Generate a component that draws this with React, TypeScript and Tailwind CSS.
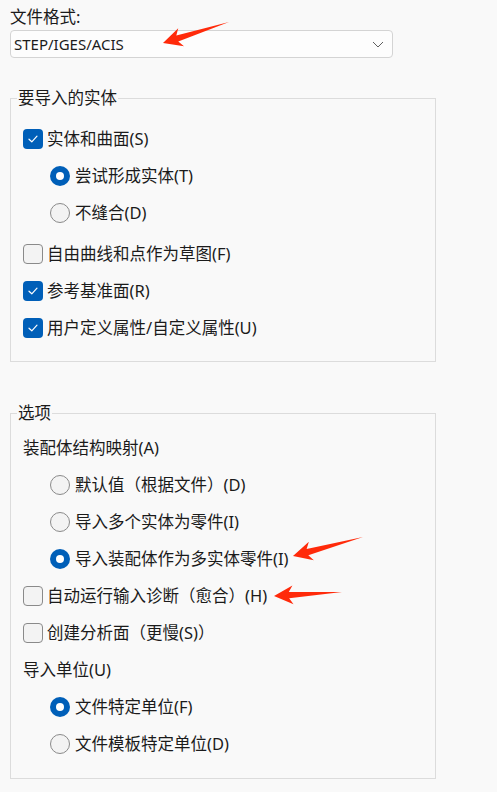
import type { ReactNode } from 'react'

const font = { fontFamily: '"Noto Sans", "Noto Sans CJK SC", sans-serif' }

function Check({ on }: { on?: boolean }) {
  if (on)
    return (
      <span className="flex h-[20px] w-[20px] shrink-0 items-center justify-center rounded-[4px] bg-[#005fb8]">
        <svg width="10" height="8" viewBox="0 0 10 8" fill="none">
          <path d="M1 4.2 L3.8 6.8 L9 1.2" stroke="#fff" strokeWidth="1.2" strokeLinecap="round" strokeLinejoin="round" />
        </svg>
      </span>
    )
  return <span className="h-[20px] w-[20px] shrink-0 rounded-[4px] border border-[#8a8a8a] bg-[#f3f3f3]" />
}

function Radio({ on }: { on?: boolean }) {
  if (on)
    return (
      <span className="flex h-[20px] w-[20px] shrink-0 items-center justify-center rounded-full bg-[#005fb8]">
        <span className="h-[8px] w-[8px] rounded-full bg-white" />
      </span>
    )
  return <span className="h-[20px] w-[20px] shrink-0 rounded-full border border-[#8a8a8a] bg-[#f3f3f3]" />
}

function CheckRow({ on, children, className = '' }: { on?: boolean; children: ReactNode; className?: string }) {
  return (
    <div className={`flex h-[37px] items-center gap-[4px] ${className}`}>
      <Check on={on} />
      <span>{children}</span>
    </div>
  )
}

function RadioRow({ on, children }: { on?: boolean; children: ReactNode }) {
  return (
    <div className="ml-[27px] flex h-[37px] items-center gap-[5px]">
      <Radio on={on} />
      <span>{children}</span>
    </div>
  )
}

function Arrow({ tip, tail }: { tip: [number, number]; tail: [number, number] }) {
  const dx = tail[0] - tip[0]
  const dy = tail[1] - tip[1]
  const len = Math.hypot(dx, dy)
  const ux = dx / len
  const uy = dy / len
  const nx = -uy
  const ny = ux
  const local: [number, number][] = [
    [0, 0],
    [19, 9.5],
    [15, 3.2],
    [len, 0],
    [15, -3.2],
    [19, -9.5],
  ]
  const pts = local.map(([a, b]) => `${tip[0] + a * ux + b * nx},${tip[1] + a * uy + b * ny}`).join(' ')
  return <polygon points={pts} fill="#ff2a0a" />
}

export default function App() {
  return (
    <div className="relative min-h-[792px] w-full bg-[#f9f9f9] px-[10px] pt-[6px] text-[16.5px] leading-[22px] text-[#1b1b1b]" style={font}>
      <div>文件格式:</div>
      <div className="mt-[2px] flex h-[28px] w-[383px] items-center justify-between rounded-[4px] border border-[#d4d4d4] bg-[#fdfdfd] pl-[3px] pr-[8px] text-[15px]">
        <span>STEP/IGES/ACIS</span>
        <svg width="12" height="7" viewBox="0 0 12 7" fill="none">
          <path d="M1 1 L6 6 L11 1" stroke="#5f5f5f" strokeWidth="1" />
        </svg>
      </div>

      <fieldset className="mt-[30px] w-[426px] border border-[#dcdcdc] p-0">
        <legend className="ml-[6px] px-[1px] leading-[20px]">要导入的实体</legend>
        <div className="px-[12px] pb-[15px] pt-[12px]">
          <CheckRow on>实体和曲面(S)</CheckRow>
          <RadioRow on>尝试形成实体(T)</RadioRow>
          <RadioRow>不缝合(D)</RadioRow>
          <CheckRow className="mt-[4px]">自由曲线和点作为草图(F)</CheckRow>
          <CheckRow on>参考基准面(R)</CheckRow>
          <CheckRow on>用户定义属性/自定义属性(U)</CheckRow>
        </div>
      </fieldset>

      <fieldset className="mt-[41px] w-[426px] border border-[#dcdcdc] p-0">
        <legend className="ml-[6px] px-[1px] leading-[20px]">选项</legend>
        <div className="px-[12px] pb-[16px] pt-[6px]">
          <div className="flex h-[37px] items-center">装配体结构映射(A)</div>
          <RadioRow>默认值（根据文件）(D)</RadioRow>
          <RadioRow>导入多个实体为零件(I)</RadioRow>
          <RadioRow on>导入装配体作为多实体零件(I)</RadioRow>
          <CheckRow>自动运行输入诊断（愈合）(H)</CheckRow>
          <CheckRow>创建分析面（更慢(S)）</CheckRow>
          <div className="flex h-[37px] items-center">导入单位(U)</div>
          <RadioRow on>文件特定单位(F)</RadioRow>
          <RadioRow>文件模板特定单位(D)</RadioRow>
        </div>
      </fieldset>

      <svg className="pointer-events-none absolute left-0 top-0" width="497" height="792">
        <Arrow tip={[163, 43]} tail={[229, 22]} />
        <Arrow tip={[293, 556]} tail={[363, 537]} />
        <Arrow tip={[274, 596]} tail={[342, 592]} />
      </svg>
    </div>
  )
}
